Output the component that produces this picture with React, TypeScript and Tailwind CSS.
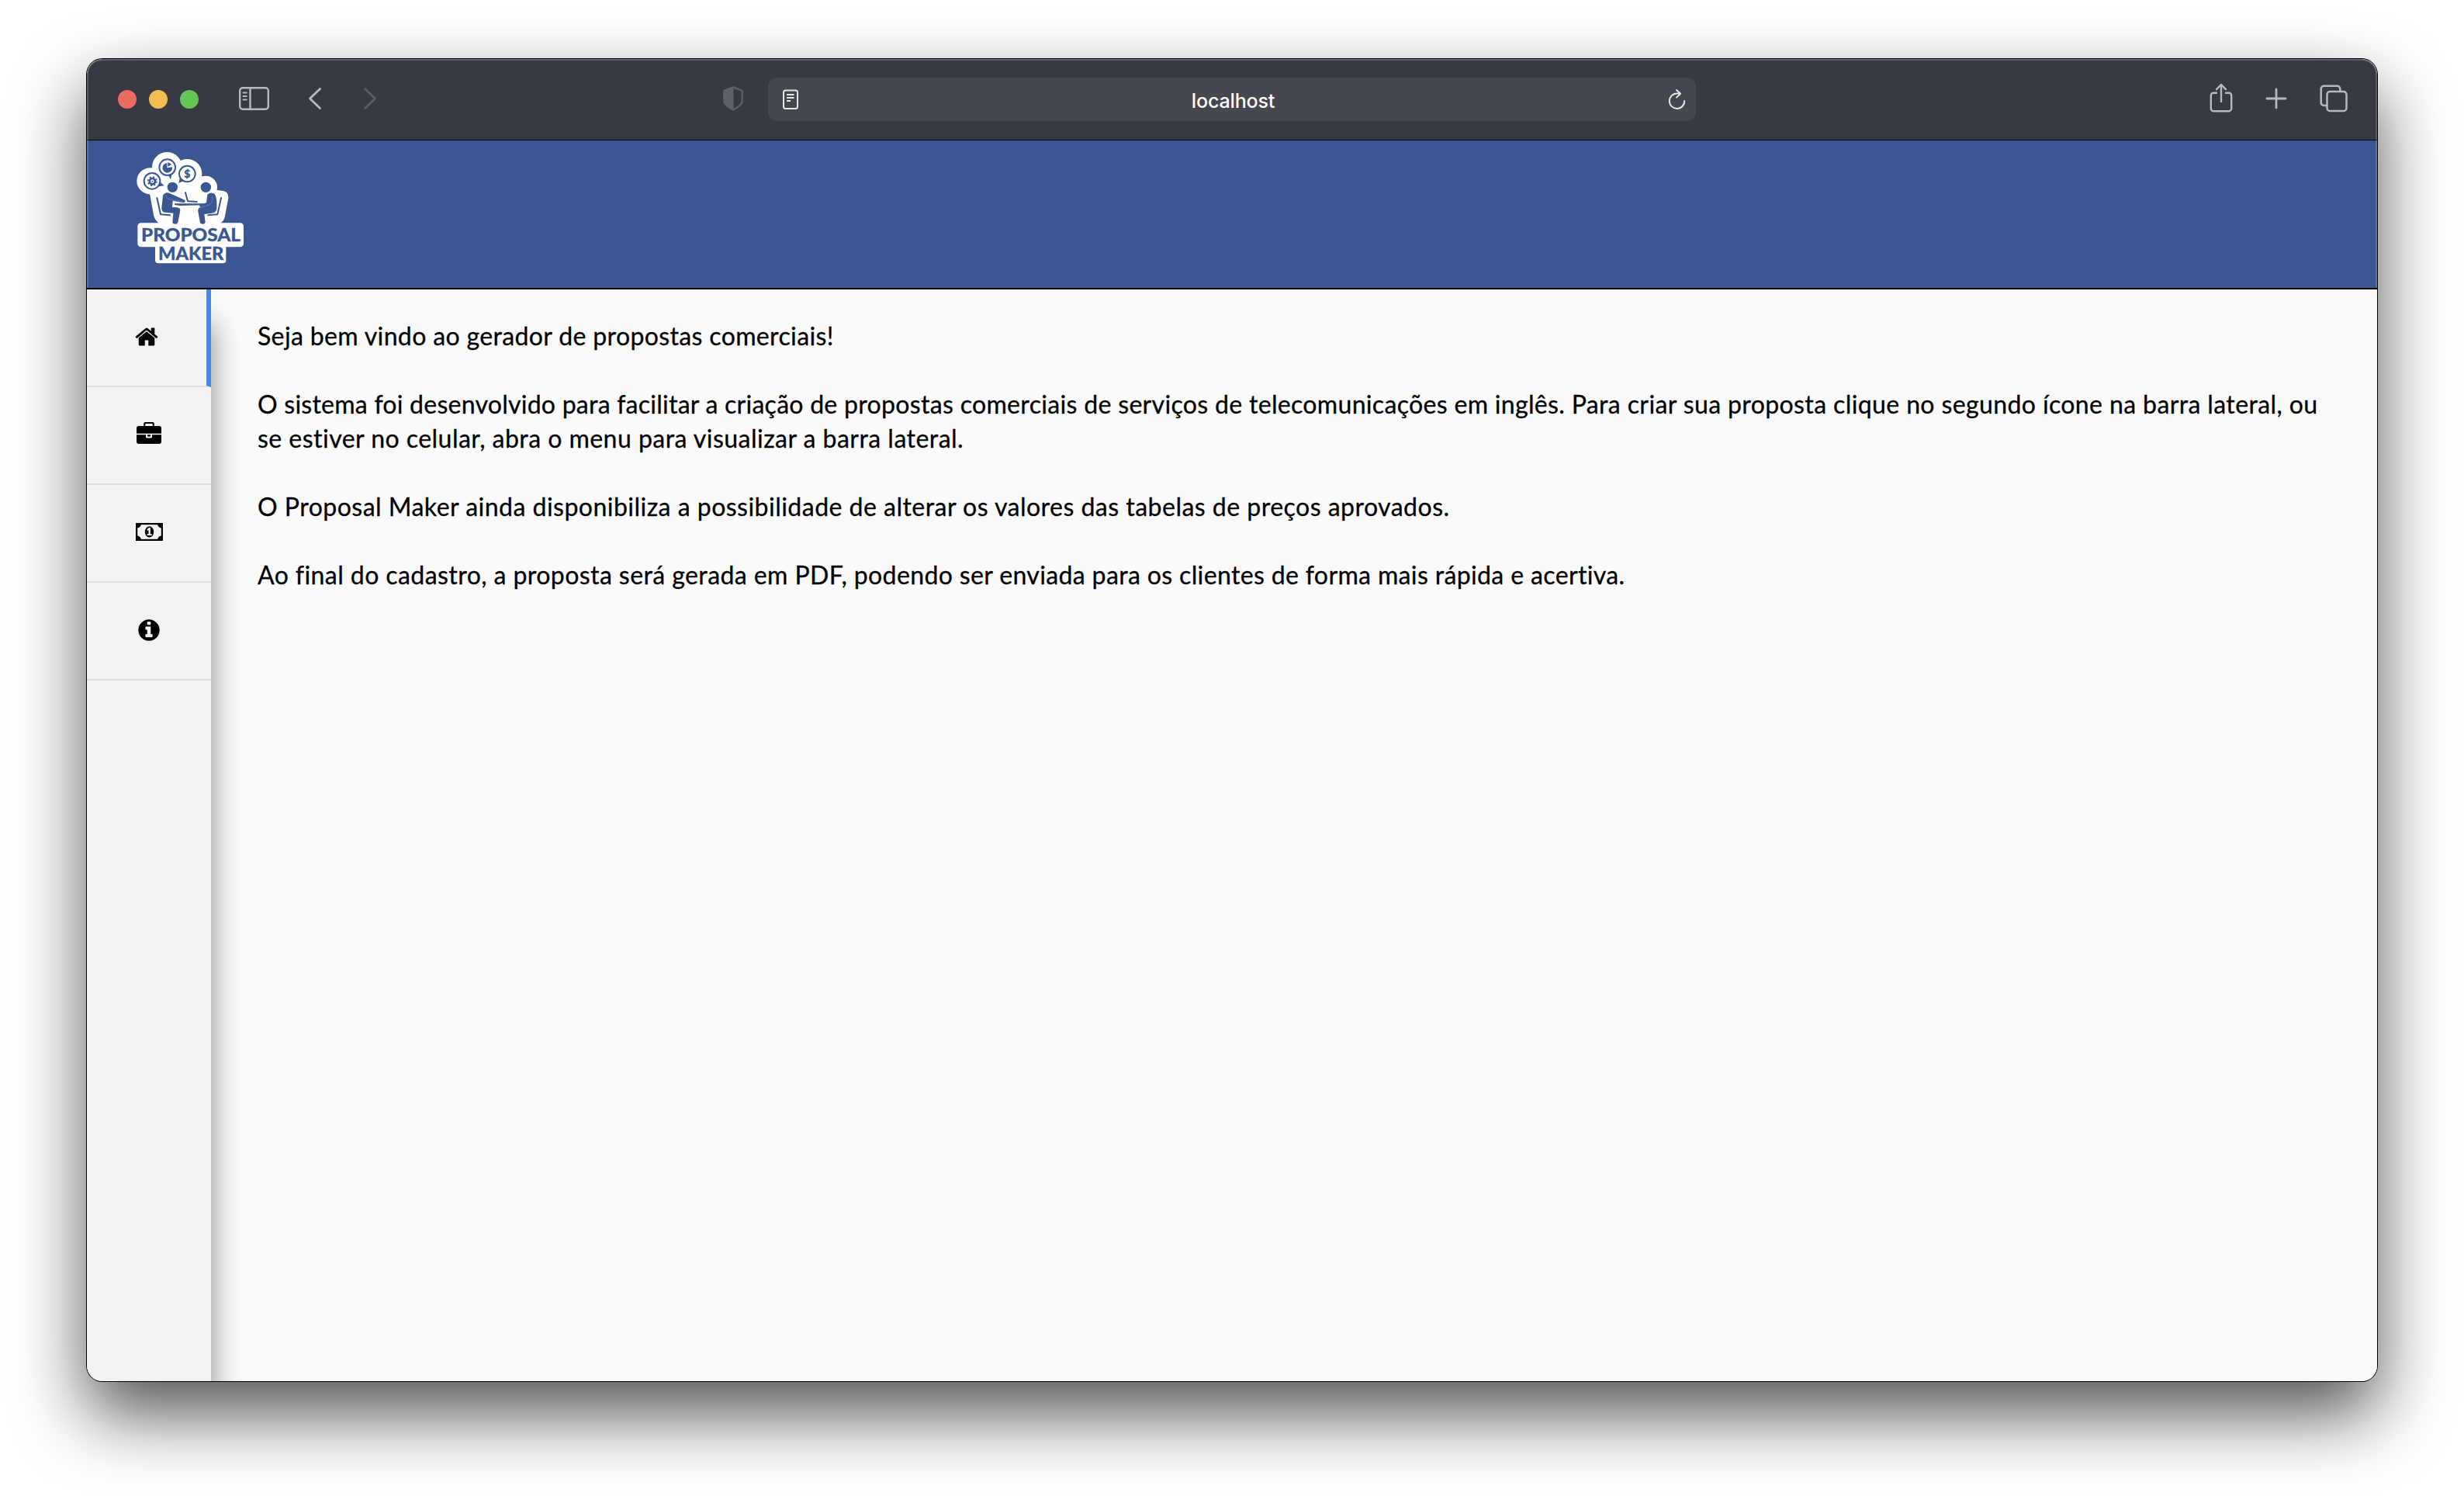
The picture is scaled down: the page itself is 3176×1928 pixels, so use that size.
import type { ReactNode } from "react";

function Logo() {
  return (
    <svg viewBox="0 3 510 507" className="h-[169px] w-[170px]">
      <g fill="#fff">
        <circle cx="100" cy="160" r="51" />
        <circle cx="166" cy="106" r="58" />
        <circle cx="244" cy="132" r="57" />
        <circle cx="316" cy="184" r="44" />
        <path d="M84 190 L100 214 L114 292 Q118 312 136 324 L368 326 Q384 318 389 300 L403 226 Q404 202 384 198 L350 194 L300 140 L200 120 L110 130Z" />
        <rect x="52" y="322" width="410" height="93" rx="13" />
        <rect x="120" y="400" width="274" height="78" rx="12" />
      </g>
      <g fill="none" stroke="#3a5793" strokeWidth="6">
        <circle cx="108" cy="160" r="31" />
        <circle cx="167" cy="107" r="31" />
        <circle cx="244" cy="132" r="31" />
        <circle cx="109" cy="161" r="11" strokeWidth="8" />
        <circle cx="109" cy="161" r="17" strokeWidth="5" strokeDasharray="6.5 6.85" />
      </g>
      <g fill="#3a5793">
        <circle cx="109" cy="161" r="3" />
        <path d="M166 109 V90 A19 19 0 1 0 186 106Z" />
        <path d="M169 104 V88 A18 18 0 0 1 183 97Z" />
        <path d="M133 181 L155 178 L141 165Z" />
        <path d="M171 137 L180 154 L184 136Z" />
        <path d="M215 150 L211 168 L229 160Z" />
        <circle cx="187" cy="184" r="20" />
        <circle cx="316" cy="184" r="20" />
        <path d="M150 216 Q158 202 174 206 L234 233 Q240 243 228 244 L188 236 L186 261 L204 262 Q220 264 216 278 L208 320 Q200 332 187 322 L190 284 L156 281 Q144 278 145 262Z" />
        <path d="M322 212 Q336 200 350 210 Q360 222 358 268 Q356 282 340 284 L310 288 L314 320 Q306 332 294 322 L286 278 Q284 264 296 262 L290 252 L318 244Z" />
        <path d="M195 247 H306 V253 L215 255 L195 252Z" />
      </g>
      <path d="M162 214 Q162 228 178 231 L230 240 M341 220 Q344 240 330 252 L290 264" fill="none" stroke="#9fb0d2" strokeWidth="1.2" />
      <g fill="none" stroke="#3a5793" strokeWidth="6" strokeLinecap="round" strokeLinejoin="round">
        <path d="M127 225 L141 289 L177 292" />
        <path d="M375 225 L361 289 L325 292" />
        <path d="M237 205 L246 238 L281 240" />
      </g>
      <g fill="#3a5793" stroke="#3a5793" fontFamily="Lato, sans-serif" fontWeight="900">
        <text x="244" y="148" fontSize="42" textAnchor="middle" strokeWidth="1">$</text>
        <text x="66" y="392" fontSize="69" textLength="384" lengthAdjust="spacingAndGlyphs" strokeWidth="0.8">PROPOSAL</text>
        <text x="132" y="464" fontSize="68" textLength="253" lengthAdjust="spacingAndGlyphs" strokeWidth="0.8">MAKER</text>
      </g>
    </svg>
  );
}

function Toolbar() {
  return (
    <div className="flex h-[105px] shrink-0 items-center border-b border-black bg-[#383a42] text-[#b6b9c2]">
      <div className="ml-10 flex gap-4">
        <span className="size-6 rounded-full bg-[#ec6a5e]" />
        <span className="size-6 rounded-full bg-[#f4be50]" />
        <span className="size-6 rounded-full bg-[#65c656]" />
      </div>
      <svg viewBox="0 0 40 32" className="-mt-0.5 ml-[51px] h-8 w-10" fill="none" stroke="currentColor" strokeWidth="2.4" strokeLinecap="round">
        <rect x="2.2" y="2.2" width="36.6" height="27.6" rx="3.5" />
        <path d="M15.5 2v28" />
        <path d="M6.5 8.5h4.2M6.5 13h4.2M6.5 17.5h4.2" strokeWidth="2" />
      </svg>
      <svg viewBox="0 0 18 30" className="-mt-0.5 ml-[50px] h-[30px] w-[18px]" fill="none" stroke="currentColor" strokeWidth="2.8" strokeLinecap="round" strokeLinejoin="round">
        <path d="M15.5 2.5L2.5 15l13 12.5" />
      </svg>
      <svg viewBox="0 0 18 30" className="-mt-0.5 ml-[53px] h-[30px] w-[18px] text-[#5d5f66]" fill="none" stroke="currentColor" strokeWidth="2.8" strokeLinecap="round" strokeLinejoin="round">
        <path d="M2.5 2.5l13 12.5-13 12.5" />
      </svg>
      <svg viewBox="0 0 28 34" className="-mt-0.5 ml-[445px] h-[34px] w-7 text-[#5f6169]">
        <path d="M14 1.2L26.8 6v14.5c0 4-4.5 8-12.8 12.3C5.7 28.5 1.2 24.5 1.2 20.5V6z" fill="currentColor" />
        <path d="M14.5 4L24.5 7.6v12.6c0 3-3.5 6-10 9.6z" fill="#383a42" />
      </svg>
      <div className="ml-[31px] flex h-14 w-[1196px] items-center rounded-xl bg-[#45474f] pr-[13px] pl-[18px] text-[#e4e5e5]">
        <svg viewBox="0 0 22 26" className="h-[26px] w-[22px]" fill="none" stroke="currentColor" strokeWidth="2" strokeLinecap="round">
          <rect x="2" y="1.5" width="18" height="23.5" rx="2.5" />
          <path d="M6 7h9.5M6 11h9.5M6 15h5" strokeWidth="1.8" strokeLinecap="butt" />
        </svg>
        <span className="flex-1 pt-[3px] text-center font-[Inter,sans-serif] text-[25px] leading-8 font-medium tracking-[-0.15px] text-white">localhost</span>
        <svg viewBox="0 0 24 28" className="h-7 w-6" fill="none" stroke="currentColor" strokeWidth="2" strokeLinecap="round" strokeLinejoin="round">
          <path d="M22.2 16a9.700 9.700 0 1 1-9.700-9.500h4" />
          <path d="M12 2l5 4.700-5 4.900" />
        </svg>
      </div>
      <svg viewBox="0 0 30 38" className="-mt-1 ml-[662px] h-[38px] w-[30px]" fill="none" stroke="currentColor" strokeWidth="2.4" strokeLinecap="round" strokeLinejoin="round">
        <path d="M10 12.700H5A3.200 3.200 0 0 0 1.800 15.900V33A3.200 3.200 0 0 0 5 36.200H25A3.200 3.200 0 0 0 28.200 33V15.900A3.200 3.200 0 0 0 25 12.700H20" strokeLinecap="butt" />
        <path d="M15 24V2.500M9 8.200L15 2l6 6.200" />
      </svg>
      <svg viewBox="0 0 28 28" className="-mt-0.5 ml-[42px] size-7" fill="none" stroke="currentColor" strokeWidth="2.8" strokeLinecap="round">
        <path d="M14 2v24M2 14h24" />
      </svg>
      <svg viewBox="0 0 36 36" className="-mt-0.5 ml-[42px] size-9" fill="none" stroke="currentColor" strokeWidth="2.5">
        <path d="M9 27H5.500A3.800 3.800 0 0 1 1.700 23.200V5.500A3.800 3.800 0 0 1 5.500 1.700H22.500A3.800 3.800 0 0 1 26.300 5.500V9" />
        <rect x="9.500" y="9" width="25" height="25" rx="3.8" />
      </svg>
    </div>
  );
}

function NavItem({ active, children }: { active?: boolean; children: ReactNode }) {
  return (
    <div
      className={
        "flex h-[126px] items-center justify-center border-b-2 border-b-[#dedede] " +
        (active ? "border-r-[6px] border-r-[#4a86e2]" : "")
      }
    >
      {children}
    </div>
  );
}

function Sidebar() {
  return (
    <nav className="relative z-10 w-[160px] shrink-0 bg-[#f3f3f3] shadow-[4px_44px_32px_rgba(0,0,0,0.38)]">
      <NavItem active>
        <svg viewBox="0 0 1792 1792" className="-mt-[3px] size-8">
          <path d="M1472 992v480q0 26-19 45t-45 19h-384v-384h-256v384h-384q-26 0-45-19t-19-45v-480q0-1 .5-3t.5-3l575-474 575 474q1 2 1 6zm223-69l-62 74q-8 9-21 11h-3q-13 0-21-7l-692-577-692 577q-12 8-24 7-13-2-21-11l-62-74q-8-10-7-23.500t11-21.500l719-599q32-26 76-26t76 26l244 204v-195q0-14 9-23t23-9h192q14 0 23 9t9 23v408l219 182q10 8 11 21.500t-7 23.500z" />
        </svg>
      </NavItem>
      <NavItem>
        <svg viewBox="0 0 32 28" className="-mt-[7px] h-7 w-8">
          <path d="M10.200 6V2.300Q10.200 1 11.500 1h9Q21.800 1 21.800 2.300V6" fill="none" stroke="#000" strokeWidth="2" />
          <path d="M0 14.700V8q0-2.900 2.900-2.900h26.200Q32 5.100 32 8v6.700z" />
          <path d="M0 16.300h12v3q0 1.100 1.100 1.100h5.800q1.100 0 1.100-1.100v-3h12v8.800q0 2.900-2.900 2.900H2.900Q0 28 0 25.100z" />
          <rect x="14" y="16.300" width="4" height="2.200" />
        </svg>
      </NavItem>
      <NavItem>
        <svg viewBox="0 0 35 23" className="-mt-[3px] h-[23px] w-[35px]">
          <rect x="1.100" y="1.100" width="32.800" height="20.800" fill="none" stroke="#000" strokeWidth="2.2" />
          <path d="M1 1h6a5.400 5.400 0 0 1-5 5.500H1zM34 1h-6a5.400 5.400 0 0 0 5 5.500h1zM1 22h6a5.400 5.400 0 0 0-5-5.500H1zM34 22h-6a5.400 5.400 0 0 1 5-5.500h1z" />
          <ellipse cx="17.500" cy="11.500" rx="5.700" ry="7.200" />
          <path d="M14.300 8.500L17 6h1.800v8.200h2v1.900h-6.300v-1.900h2V9l-1 .9z" fill="#f3f3f3" />
        </svg>
      </NavItem>
      <NavItem>
        <svg viewBox="0 0 1792 1792" className="-mt-[3px] size-8">
          <path d="M1152 1376v-160q0-14-9-23t-23-9h-96v-512q0-14-9-23t-23-9h-320q-14 0-23 9t-9 23v160q0 14 9 23t23 9h96v320h-96q-14 0-23 9t-9 23v160q0 14 9 23t23 9h448q14 0 23-9t9-23zm-128-896v-160q0-14-9-23t-23-9h-192q-14 0-23 9t-9 23v160q0 14 9 23t23 9h192q14 0 23-9t9-23zm640 416q0 209-103 385.500t-279.500 279.500-385.500 103-385.500-103-279.500-279.500-103-385.500 103-385.500 279.500-279.500 385.500-103 385.500 103 279.500 279.500 103 385.500z" />
        </svg>
      </NavItem>
    </nav>
  );
}

export default function App() {
  return (
    <div className="h-[1928px] w-[3176px] overflow-hidden bg-white pt-[76px] pl-[112px]">
      <div className="relative h-[1704px] w-[2952px] rounded-[20px] shadow-[0_0_0_1px_#000,0_42px_92px_rgba(0,0,0,0.68)]">
        <div className="flex h-full flex-col overflow-hidden rounded-[20px]">
          <Toolbar />
          <header className="flex h-[192px] shrink-0 border-b-2 border-black bg-[#3a5793] pl-12">
            <Logo />
          </header>
          <div className="flex flex-1">
            <Sidebar />
            <main className="flex-1 bg-[#fafafa] pt-[38px] pl-[60px] font-[Lato,sans-serif] text-[32px] leading-[44px] whitespace-nowrap text-black [-webkit-text-stroke:0.3px_#000]">
              <p className="mb-11 tracking-[0.36px]">Seja bem vindo ao gerador de propostas comerciais!</p>
              <p className="mb-11">
                <span className="tracking-[0.25px]">O sistema foi desenvolvido para facilitar a criação de </span>
                <span className="tracking-[0.33px]">propostas comerciais de serviços de telecomunicações em inglês. </span>
                <span className="tracking-[0.385px]">Para criar sua proposta clique no segundo ícone na barra lateral, ou</span>
                <br />
                <span className="tracking-[0.47px]">se estiver no celular, abra o menu para visualizar a barra lateral.</span>
              </p>
              <p className="mb-11 tracking-[0.48px]">O Proposal Maker ainda disponibiliza a possibilidade de alterar os valores das tabelas de preços aprovados.</p>
              <p>
                <span className="tracking-[0.425px]">Ao final do cadastro, a proposta será gerada em PDF, </span>
                <span className="tracking-[0.366px]">podendo ser enviada para os clientes de forma mais rápida e acertiva.</span>
              </p>
            </main>
          </div>
        </div>
        <div className="pointer-events-none absolute inset-x-0 top-0 z-20 h-[295px] rounded-t-[20px] shadow-[inset_0_2px_0_rgba(255,255,255,0.2),inset_2px_0_0_rgba(255,255,255,0.18),inset_-2px_0_0_rgba(255,255,255,0.18)]" />
      </div>
    </div>
  );
}
